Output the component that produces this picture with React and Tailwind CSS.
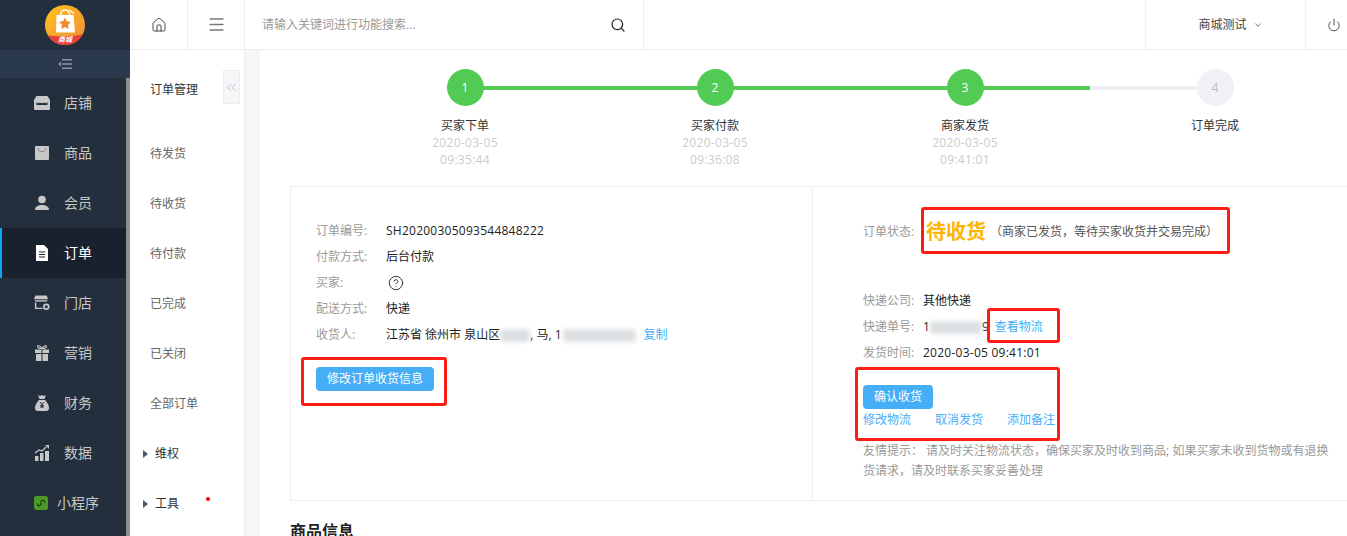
import { Home, Menu, Search, Power, ChevronDown, ChevronsLeft, HelpCircle } from 'lucide-react';

const FONT = "font-['Open_Sans','Noto_Sans_CJK_SC',sans-serif]";

// sidebar glyphs, all on a 16 x 16 box
const ShopIcon = () => (
  <svg viewBox="0 0 16 16" className="w-4 h-4" fill="#c8c8c8">
    <path d="M2.500 1h11L16 5v9.500l-1 .5H1l-1-.5V5z" />
    <path d="M2.500 7c1.500 1.500 2.500 1.500 3.500.5 1 1 3 1 4 0 1 1 2 1 3.500-.5V10h-11z" fill="#232f3c" />
  </svg>
);
const BagIcon = () => (
  <svg viewBox="0 0 16 16" className="w-4 h-4" fill="#c8c8c8">
    <rect x="1" y="1" width="14" height="14" rx="1" />
    <path d="M4 3c0 5 8 5 8 0" fill="none" stroke="#7b828a" strokeWidth="1" />
  </svg>
);
const UserIcon = () => (
  <svg viewBox="0 0 16 16" className="w-4 h-4" fill="#c8c8c8">
    <circle cx="8" cy="4.500" r="3.800" />
    <path d="M1 15c0-3.500 3-5 7-5s7 1.500 7 5z" />
  </svg>
);
const DocIcon = () => (
  <svg viewBox="0 0 16 16" className="w-4 h-4" fill="#fff">
    <path d="M2 0h8l4 4v12H2z" />
    <path d="M5 7h6M5 9.500h6M5 12h6" stroke="#1a212e" strokeWidth="1.200" />
  </svg>
);
const StoreIcon = () => (
  <svg viewBox="0 0 17 16" className="w-[17px] h-4" fill="#c8c8c8">
    <path d="M1.500 0h12L15 4H0z" />
    <path d="M1 5h13v1.500H1z" />
    <path d="M1 7.500h1.500V13H9v1.500H1z" />
    <circle cx="13" cy="12" r="2.600" fill="none" stroke="#c8c8c8" strokeWidth="1.800" />
  </svg>
);
const GiftIcon = () => (
  <svg viewBox="0 0 16 16" className="w-4 h-4" fill="#c8c8c8">
    <path d="M8 3.500C6 .5 3.500 0 3.500 1.500S5.500 3.500 8 3.500C10.500 3.500 12.500 3 12.500 1.500S10 .5 8 3.500z" fill="none" stroke="#c8c8c8" strokeWidth="1.100" />
    <path d="M1 4.500h6.500V8H1zM8.500 4.500H15V8H8.500zM2 9h5.500v7H2zM8.500 9H14v7H8.500z" />
  </svg>
);
const MoneyIcon = () => (
  <svg viewBox="0 0 16 16" className="w-4 h-4" fill="#c8c8c8">
    <path d="M4 0l2 1 2-1 2 1 2-1-1.500 4h-5z" />
    <path d="M5 5h6c2 2 4 5 4 8 0 2-1 3-3 3H4c-2 0-3-1-3-3 0-3 2-6 4-8z" />
    <path d="M6 7l2 2.500L10 7M8 9.500V13M6.200 10.500h3.600M6.200 12h3.600" fill="none" stroke="#232f3c" />
  </svg>
);
const ChartIcon = () => (
  <svg viewBox="0 0 16 16" className="w-4 h-4" fill="#c8c8c8">
    <path d="M1 11h3.500v5H1zM6 8h3.500v8H6zM11 6h4v10h-4z" />
    <path d="M1 8l4-3 3 1 4-4" fill="none" stroke="#c8c8c8" strokeWidth="1.300" />
    <path d="M11 0h4v4z" />
  </svg>
);
const MiniIcon = () => (
  <svg viewBox="0 0 14 14" className="w-[14px] h-[14px]">
    <rect width="14" height="14" rx="2.500" fill="#4e9a28" />
    <path d="M3.500 7.500a1.800 1.800 0 1 0 3.500 1V5.500a1.800 1.800 0 1 1 3.500 1" fill="none" stroke="#1d3a10" strokeWidth="1.200" />
  </svg>
);

const LogoIcon = () => (
  <svg viewBox="0 0 40 40" className="w-10 h-10">
    <defs>
      <linearGradient id="logoBg" x1="0" y1="0" x2="1" y2="1">
        <stop offset="0" stopColor="#fcc41f" />
        <stop offset="1" stopColor="#f58a35" />
      </linearGradient>
      <clipPath id="logoClip">
        <circle cx="20" cy="20" r="20" />
      </clipPath>
    </defs>
    <circle cx="20" cy="20" r="20" fill="url(#logoBg)" />
    <path d="M0 30c12 2 28 2 40-1v11H0z" fill="#ea3f38" clipPath="url(#logoClip)" />
    <path d="M11.500 10h17l1.500 17.500H11z" fill="#fff" />
    <path d="M15.500 11c0-8 8-8 9-1M24 5l5 3.500" fill="none" stroke="#fff" strokeWidth="1.300" />
    <path d="M20 12.500l1.900 3.800 4.100.6-3 2.900.7 4.100-3.700-2-3.700 2 .7-4.100-3-2.900 4.100-.6z" fill="#f08c2e" />
    <text x="20" y="37" textAnchor="middle" fontSize="7" fontStyle="italic" fontWeight="700" fill="#fff">商城</text>
  </svg>
);

const menu = [
  { label: '店铺', icon: <ShopIcon /> },
  { label: '商品', icon: <BagIcon /> },
  { label: '会员', icon: <UserIcon /> },
  { label: '订单', icon: <DocIcon />, active: true },
  { label: '门店', icon: <StoreIcon /> },
  { label: '营销', icon: <GiftIcon /> },
  { label: '财务', icon: <MoneyIcon /> },
  { label: '数据', icon: <ChartIcon /> },
];

const subMenu = ['待发货', '待收货', '待付款', '已完成', '已关闭', '全部订单'];

const steps = [
  { n: 1, title: '买家下单', date: '2020-03-05', time: '09:35:44' },
  { n: 2, title: '买家付款', date: '2020-03-05', time: '09:36:08' },
  { n: 3, title: '商家发货', date: '2020-03-05', time: '09:41:01', half: true },
  { n: 4, title: '订单完成', todo: true },
];

const Blur = ({ className }) => (
  <span className={`inline-block h-[13px] align-middle rounded-sm bg-[#dde0e2] blur-[2px] ${className}`} />
);

const Num = ({ children }) => <span className="tracking-[0.25px]">{children}</span>;

const Row = ({ label, children, labelWidth = 'w-[70px]' }) => (
  <div className="flex items-center h-[26px]">
    <span className={`${labelWidth} shrink-0 text-[#999]`}>{label}</span>
    <span className="text-[#222] whitespace-nowrap">{children}</span>
  </div>
);

function Sidebar() {
  return (
    <aside className="w-[130px] shrink-0 flex flex-col bg-[#232f3c]">
      <div className="h-[50px] shrink-0 flex items-center justify-center">
        <LogoIcon />
      </div>
      <div className="h-[28px] shrink-0 flex items-center justify-center bg-[#2a3a4c] text-[#8b949e]">
        <svg viewBox="0 0 14 10" className="w-[14px] h-[10px]" fill="currentColor">
          <path d="M0 5l3-2.500v5zM4 0h10v1.500H4zM4 4.200h10v1.500H4zM4 8.500h10V10H4z" />
        </svg>
      </div>
      <div className="flex flex-1 min-h-0">
        <nav className="w-[126px] shrink-0">
          {menu.map((item) => (
            <div
              key={item.label}
              className={`h-[50px] flex items-center pl-[32px] gap-[14px] text-sm border-l-2 ${
                item.active ? 'bg-[#1a212e] border-[#0ea5f5] text-white' : 'border-transparent text-[#c8c8c8]'
              }`}
            >
              <span className="w-4 flex justify-center">{item.icon}</span>
              {item.label}
            </div>
          ))}
          <div className="h-[50px] flex items-center pl-[34px] gap-[9px] text-sm text-[#c8c8c8]">
            <MiniIcon />
            小程序
          </div>
        </nav>
        <div className="w-1 bg-[#8e8e8e]" />
      </div>
    </aside>
  );
}

function TopBar() {
  return (
    <header className="h-[50px] shrink-0 flex bg-white border-b border-[#eee] text-xs">
      <div className="w-[58px] flex items-center justify-center border-r border-[#eee] text-[#444]">
        <Home size={16} strokeWidth={1.500} />
      </div>
      <div className="w-[57px] flex items-center justify-center border-r border-[#eee] text-[#777]">
        <Menu size={19} strokeWidth={2} />
      </div>
      <div className="w-[399px] flex items-center justify-between pl-[17px] pr-[17px] border-r border-[#eee]">
        <span className="text-[#999]">请输入关键词进行功能搜索...</span>
        <Search size={16} strokeWidth={1.800} className="text-[#222]" />
      </div>
      <div className="flex-1" />
      <div className="w-[161px] flex items-center justify-center pl-[10px] gap-[6px] border-l border-r border-[#eee] text-[#444]">
        商城测试
        <ChevronDown size={10} strokeWidth={2} className="text-[#555]" />
      </div>
      <div className="w-[41px] flex items-center pl-[21px] text-[#333]">
        <Power size={14} strokeWidth={1.500} />
      </div>
    </header>
  );
}

function SubMenu() {
  return (
    <div className="relative w-[115px] shrink-0 bg-white border-r border-[#eee] text-xs">
      <div className="h-[79px] pl-5 pt-[32px] text-[#333]">订单管理</div>
      <button className="absolute right-[4px] top-[20px] w-[17px] h-[34px] flex items-center justify-center bg-[#f5f6f8] border border-[#eee] text-[#b9c0c8]">
        <ChevronsLeft size={15} strokeWidth={1.500} />
      </button>
      {subMenu.map((s) => (
        <div key={s} className="h-[50px] flex items-center pl-5 text-[#666]">
          {s}
        </div>
      ))}
      {['维权', '工具'].map((s) => (
        <div key={s} className="h-[50px] flex items-center pl-[13px] gap-[7px] text-[#333]">
          <span className="w-0 h-0 border-y-[4px] border-y-transparent border-l-[5px] border-l-[#4a5a6c]" />
          {s}
        </div>
      ))}
      <span className="absolute left-[76px] top-[447px] w-1 h-1 rounded-full bg-[#f00]" />
    </div>
  );
}

function Steps() {
  return (
    <div className="flex pl-[80px] pt-[19px] w-[1080px] text-xs">
      {steps.map((s) => (
        <div key={s.n} className="relative w-[250px] flex flex-col items-center leading-[17px]">
          {s.n < 4 && (
            <div className="absolute left-[125px] top-[17px] w-[250px] h-1 bg-[#f0f1f5]">
              <div className={`h-full bg-[#52cb54] ${s.half ? 'w-1/2' : 'w-full'}`} />
            </div>
          )}
          <div
            className={`relative w-[37px] h-[37px] rounded-full flex items-center justify-center ${
              s.todo ? 'bg-[#f0f1f5] text-[#bbb]' : 'bg-[#52cb54] text-white'
            }`}
          >
            {s.n}
          </div>
          <div className="mt-[11px] text-[#333]">{s.title}</div>
          <div className="text-[#ccc] tracking-[0.3px]">{s.date}</div>
          <div className="text-[#ccc] tracking-[0.3px]">{s.time}</div>
        </div>
      ))}
    </div>
  );
}

const RedBox = ({ className }) => (
  <div className={`absolute border-[3px] border-[#fd1d14] rounded-[3px] pointer-events-none ${className}`} />
);

function OrderPanel() {
  return (
    <div className="relative flex w-[1100px] h-[315px] mt-[18px] ml-[30px] border border-[#eee] text-xs">
      <div className="w-[522px] shrink-0 border-r border-[#eee] pl-[25px] pt-[31px]">
        <Row label="订单编号:"><Num>SH20200305093544848222</Num></Row>
        <Row label="付款方式:">后台付款</Row>
        <Row label="买家:">
          <HelpCircle size={16} strokeWidth={1.500} className="ml-[2px] text-[#333]" />
        </Row>
        <Row label="配送方式:">快递</Row>
        <Row label="收货人:">
          江苏省 徐州市 泉山区<Blur className="w-[30px]" />, 马, 1<Blur className="w-[73px] ml-[1px]" />
          <span className="ml-[8px] text-[#46aef7]">复制</span>
        </Row>
        <button className="mt-[19px] w-[118px] h-6 rounded-sm bg-[#46aef7] text-white">修改订单收货信息</button>
      </div>
      <div className="flex-1 pl-[50px] pt-[27px]">
        <div className="flex items-center h-[36px]">
          <span className="w-[63px] text-[#999]">订单状态:</span>
          <span className="text-xl font-bold text-[#ffb400]">待收货</span>
          <span className="ml-[4px] text-[#555]">（商家已发货，等待买家收货并交易完成）</span>
        </div>
        <div className="mt-[38px]">
          <Row label="快递公司:" labelWidth="w-[60px]">其他快递</Row>
          <Row label="快递单号:" labelWidth="w-[60px]">
            1<Blur className="w-[52px]" />9<span className="ml-[6px] text-[#46aef7]">查看物流</span>
          </Row>
          <Row label="发货时间:" labelWidth="w-[60px]"><Num>2020-03-05 09:41:01</Num></Row>
        </div>
        <button className="block mt-[19px] w-[70px] h-6 rounded-sm bg-[#46aef7] text-white">确认收货</button>
        <div className="flex gap-[24px] mt-[1px] h-5 items-center text-[#46aef7]">
          <span>修改物流</span>
          <span>取消发货</span>
          <span>添加备注</span>
        </div>
        <p className="mt-[11px] w-[470px] leading-5 text-[#999]">
          友情提示： 请及时关注物流状态，确保买家及时收到商品; 如果买家未收到货物或有退换货请求，请及时联系买家妥善处理
        </p>
      </div>
      <RedBox className="left-[10px] top-[170px] w-[146px] h-[49px]" />
      <RedBox className="left-[630px] top-[20px] w-[309px] h-[47px]" />
      <RedBox className="left-[696px] top-[121px] w-[73px] h-[35px]" />
      <RedBox className="left-[564px] top-[180px] w-[205px] h-[74px]" />
    </div>
  );
}

export default function App() {
  return (
    <div className={`flex w-[1347px] h-[536px] overflow-hidden bg-white ${FONT}`}>
      <Sidebar />
      <div className="flex-1 min-w-0 flex flex-col">
        <TopBar />
        <div className="flex flex-1 min-h-0">
          <SubMenu />
          <div className="w-[15px] shrink-0 bg-[#f5f6f8]" />
          <main className="flex-1 min-w-0 overflow-hidden bg-white">
            <Steps />
            <OrderPanel />
            <h3 className="mt-[18px] ml-[30px] text-base font-bold text-[#222]">商品信息</h3>
          </main>
        </div>
      </div>
    </div>
  );
}
